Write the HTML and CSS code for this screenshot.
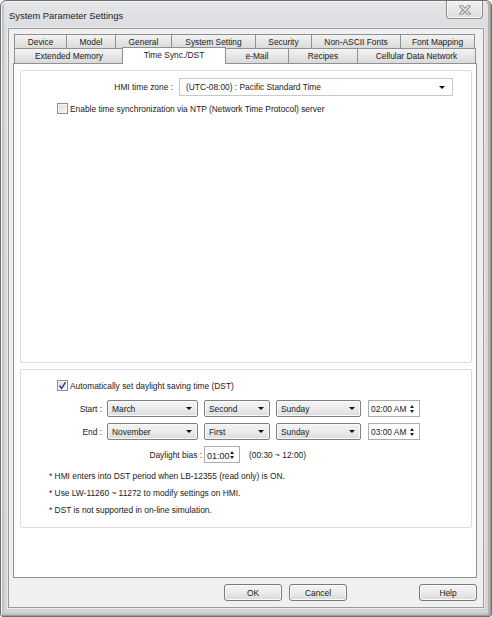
FILE: index.html
```html
<!DOCTYPE html>
<html lang="en">
<head>
    <meta charset="UTF-8">
    <title>System Parameter Settings</title>
    <link rel="stylesheet" href="styles.css">
</head>
<body>
    <div class="window">
        <div class="titlebar">
            <span class="title">System Parameter Settings</span>
            <div class="close-btn">
                <svg width="12" height="10" viewBox="0 0 12 10">
                    <path d="M2 1 L10 9 M10 1 L2 9" stroke="#7d7d7d" stroke-width="3.2" stroke-linecap="round"/>
                    <path d="M2 1 L10 9 M10 1 L2 9" stroke="#fafafa" stroke-width="1.4" stroke-linecap="round"/>
                </svg>
            </div>
        </div>

        <div class="client">
            <div class="tabs">
                <div class="tab-row row1">
                    <div class="tab">Device</div>
                    <div class="tab">Model</div>
                    <div class="tab">General</div>
                    <div class="tab">System Setting</div>
                    <div class="tab">Security</div>
                    <div class="tab">Non-ASCII Fonts</div>
                    <div class="tab">Font Mapping</div>
                </div>
                <div class="tab-row row2">
                    <div class="tab">Extended Memory</div>
                    <div class="tab active">Time Sync./DST</div>
                    <div class="tab">e-Mail</div>
                    <div class="tab">Recipes</div>
                    <div class="tab">Cellular Data Network</div>
                </div>
            </div>

            <div class="panel">
                <div class="group group-ntp">
                    <div class="tz-row">
                        <span class="tz-label">HMI time zone :</span>
                        <div class="combo combo-white tz-combo">
                            <span>(UTC-08:00) : Pacific Standard Time</span>
                            <i class="arrow"></i>
                        </div>
                    </div>
                    <div class="check-row">
                        <span class="checkbox"></span>
                        <span>Enable time synchronization via NTP (Network Time Protocol) server</span>
                    </div>
                </div>

                <div class="group group-dst">
                    <div class="check-row dst-check">
                        <span class="checkbox checked">
                            <svg width="9" height="9" viewBox="0 0 9 9">
                                <path d="M1.5 4.5 L3.6 7.4 L7.6 1.2" fill="none" stroke="#2b3a9a" stroke-width="1.4"/>
                            </svg>
                        </span>
                        <span>Automatically set daylight saving time (DST)</span>
                    </div>

                    <div class="dst-row">
                        <span class="row-label">Start :</span>
                        <div class="combo combo-grey w-month"><span>March</span><i class="arrow"></i></div>
                        <div class="combo combo-grey w-week"><span>Second</span><i class="arrow"></i></div>
                        <div class="combo combo-grey w-day"><span>Sunday</span><i class="arrow"></i></div>
                        <div class="spin w-time"><span>02:00 AM</span><i class="spin-arrows"></i></div>
                    </div>
                    <div class="dst-row">
                        <span class="row-label">End :</span>
                        <div class="combo combo-grey w-month"><span>November</span><i class="arrow"></i></div>
                        <div class="combo combo-grey w-week"><span>First</span><i class="arrow"></i></div>
                        <div class="combo combo-grey w-day"><span>Sunday</span><i class="arrow"></i></div>
                        <div class="spin w-time"><span>03:00 AM</span><i class="spin-arrows"></i></div>
                    </div>

                    <div class="bias-row">
                        <span class="bias-label">Daylight bias :</span>
                        <div class="spin w-bias"><span>01:00</span><i class="spin-arrows"></i></div>
                        <span class="bias-range">(00:30 ~ 12:00)</span>
                    </div>

                    <div class="notes">
                        <div>* HMI enters into DST period when LB-12355 (read only) is ON.</div>
                        <div>* Use LW-11260 ~ 11272 to modify settings on HMI.</div>
                        <div>* DST is not supported in on-line simulation.</div>
                    </div>
                </div>
            </div>

            <div class="footer">
                <div class="btn">OK</div>
                <div class="btn">Cancel</div>
                <div class="btn help">Help</div>
            </div>
        </div>
    </div>
</body>
</html>
```

FILE: styles.css
```css
* {
    box-sizing: border-box;
}
body {
    margin: 0;
    width: 492px;
    height: 617px;
    overflow: hidden;
    background: #ffffff;
    font-family: "Liberation Sans", Arial, sans-serif;
    font-size: 8.4px;
    color: #1a1a1a;
}
.window {
    width: 492px;
    height: 617px;
    border: 1px solid #6f6f6f;
    border-radius: 6px 6px 3px 3px;
    background: linear-gradient(to bottom, #e6e7e9, #d9dbde 30px, #d2d4d7);
    box-shadow: inset 1px 1px 0 #f4f4f4, inset -1px -1px 0 #9c9c9c,
                inset 3px 0 0 #c4c4c4, inset -3px 0 0 #b4b4b4,
                inset 0 -3px 0 #c2c2c2;
    padding: 0 7px 8px 7px;
    display: flex;
    flex-direction: column;
}
.titlebar {
    height: 27px;
    display: flex;
    align-items: center;
    justify-content: space-between;
    padding-left: 1px;
}
.title {
    font-size: 9.4px;
    color: #1e1e1e;
    margin-top: 2px;
}
.close-btn {
    align-self: flex-start;
    width: 37px;
    height: 18px;
    margin-right: 1px;
    border: 1px solid #8b8b8b;
    border-top: 0;
    border-radius: 0 0 4px 4px;
    background: linear-gradient(to bottom, #f2f2f2, #dcdcdc);
    box-shadow: inset 0 0 0 1px #f8f8f8;
    display: flex;
    align-items: center;
    justify-content: center;
}

/* client area */
.client {
    flex: 1;
    background: #f0f0f0;
    border: 1px solid #9a9a9a;
    box-shadow: 0 0 0 1px #ececec;
    padding: 5px 6px 0 4px;
    display: flex;
    flex-direction: column;
}
.tabs {
    padding-left: 1px;
    padding-right: 2px;
}
.tab-row {
    display: flex;
}
.tab {
    height: 14px;
    border: 1px solid #8e9096;
    border-bottom: 0;
    margin-right: -1px;
    background: linear-gradient(to bottom, #f3f3f3, #e6e6e6 50%, #dadada);
    display: flex;
    align-items: center;
    justify-content: center;
    white-space: nowrap;
}
.row2 .tab {
    height: 15px;
}
.row1 .tab:nth-child(1) { width: 53px; }
.row1 .tab:nth-child(2) { width: 50px; }
.row1 .tab:nth-child(3) { width: 57px; }
.row1 .tab:nth-child(4) { width: 85px; }
.row1 .tab:nth-child(5) { width: 57px; }
.row1 .tab:nth-child(6) { width: 90px; }
.row1 .tab:nth-child(7) { width: 75px; }
.row2 .tab:nth-child(1) { width: 110px; }
.row2 .tab:nth-child(2) { width: 102px; }
.row2 .tab:nth-child(3) { width: 64px; }
.row2 .tab:nth-child(4) { width: 70px; }
.row2 .tab:nth-child(5) { width: 119px; }
.row2 .tab.active {
    height: 17px;
    margin-top: -1px;
    margin-bottom: -1px;
    margin-left: -1px;
    width: 104px;
    background: #ffffff;
    position: relative;
    z-index: 2;
    align-items: flex-start;
    padding-top: 2px;
}

.panel {
    height: 515px;
    background: #ffffff;
    border: 1px solid #8e9096;
    padding: 6px 4px 0 6px;
}
.group {
    border: 1px solid #d9dde1;
    border-radius: 2px;
    box-shadow: inset 1px 1px 0 #ffffff;
}
.group-ntp {
    height: 293px;
    padding-top: 7px;
}
.group-dst {
    height: 159px;
    margin-top: 6px;
    padding-top: 10px;
}

.tz-row {
    display: flex;
    align-items: center;
    height: 18px;
}
.tz-label {
    width: 152px;
    text-align: right;
    margin-right: 6px;
}
.tz-combo {
    width: 274px;
    height: 18px;
}

.check-row {
    display: flex;
    align-items: center;
    height: 11px;
    margin-top: 7px;
    padding-left: 36px;
}
.dst-check {
    margin-top: 0;
}
.checkbox {
    width: 11px;
    height: 11px;
    border: 1px solid #8e8f8f;
    background: linear-gradient(135deg, #dcdcdc, #f6f6f6);
    box-shadow: inset 0 0 0 1px #f4f4f4;
    margin-right: 2px;
    display: flex;
    align-items: center;
    justify-content: center;
}

/* combo boxes */
.combo {
    display: flex;
    align-items: center;
    justify-content: space-between;
    padding: 0 5px 0 4px;
    white-space: nowrap;
}
.combo-white {
    background: #ffffff;
    border: 1px solid #c5c8cc;
    padding-left: 6px;
    padding-right: 7px;
}
.combo-grey {
    height: 17px;
    border: 1px solid #7f7f7f;
    border-radius: 2px;
    background: linear-gradient(to bottom, #f4f4f4, #ebebeb 50%, #dcdcdc);
    box-shadow: inset 0 0 0 1px #fbfbfb;
}
.arrow {
    width: 0;
    height: 0;
    border-left: 3px solid transparent;
    border-right: 3px solid transparent;
    border-top: 3px solid #111111;
}

.dst-row {
    display: flex;
    align-items: center;
    height: 17px;
    margin-top: 9px;
}
.dst-row + .dst-row {
    margin-top: 6px;
}
.row-label {
    width: 81px;
    text-align: right;
    margin-right: 5px;
}
.w-month { width: 91px; margin-right: 6px; }
.w-week { width: 66px; margin-right: 6px; }
.w-day { width: 85px; margin-right: 7px; }
.w-time { width: 52px; }
.w-bias { width: 36px; margin-right: 9px; }

.spin {
    height: 17px;
    border: 1px solid #abadb3;
    background: #ffffff;
    display: flex;
    align-items: center;
    justify-content: space-between;
    padding: 0 4px 0 2px;
    white-space: nowrap;
}
.w-bias span {
    font-size: 9px;
    margin-top: 2px;
}
.spin-arrows {
    width: 5px;
    height: 8px;
    position: relative;
}
.spin-arrows::before,
.spin-arrows::after {
    content: "";
    position: absolute;
    left: 0;
    border-left: 2.5px solid transparent;
    border-right: 2.5px solid transparent;
}
.spin-arrows::before {
    top: 0;
    border-bottom: 3px solid #222222;
}
.spin-arrows::after {
    bottom: 0;
    border-top: 3px solid #222222;
}

.bias-row {
    display: flex;
    align-items: center;
    height: 17px;
    margin-top: 6px;
}
.bias-label {
    width: 181px;
    text-align: right;
    margin-right: 2px;
}

.notes {
    margin-top: 5px;
    padding-left: 28px;
    line-height: 17px;
}

/* bottom buttons */
.footer {
    display: flex;
    justify-content: flex-end;
    padding-top: 6px;
    padding-right: 0;
}
.btn {
    width: 58px;
    height: 17px;
    border: 1px solid #7a7a7a;
    border-radius: 3px;
    background: linear-gradient(to bottom, #f4f4f4, #ebebeb 50%, #d9d9d9);
    box-shadow: inset 0 0 0 1px #fbfbfb;
    display: flex;
    align-items: center;
    justify-content: center;
    margin-left: 7px;
}
.btn.help {
    margin-left: 72px;
}
```
